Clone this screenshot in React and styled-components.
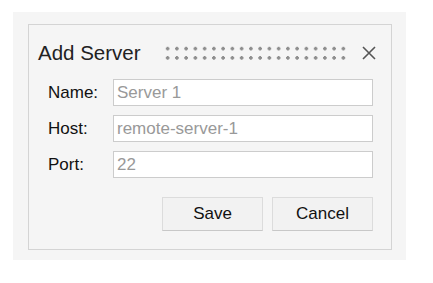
import React from "react";
import styled, { createGlobalStyle } from "styled-components";

const GlobalStyle = createGlobalStyle`
  body {
    margin: 0;
    background: #ffffff;
    font-family: "Liberation Sans", Arial, sans-serif;
  }
`;

const Backdrop = styled.div`
  margin: 12px 0 0 13px;
  width: 393px;
  height: 248px;
  box-sizing: border-box;
  padding: 12px 14px 10px 15px;
  background: #f5f5f5;
`;

const Dialog = styled.div`
  height: 100%;
  box-sizing: border-box;
  border: 1px solid #d4d4d4;
  padding: 13px 14px 0 9px;
  display: flex;
  flex-direction: column;
`;

const Header = styled.div`
  height: 30px;
  display: flex;
  align-items: center;
`;

const Title = styled.div`
  font-size: 20.5px;
  color: #222;
  white-space: nowrap;
`;

const Grip = styled.div`
  margin-left: 22px;
  width: 185px;
  height: 18.5px;
  background-image: radial-gradient(circle, #8e8e8e 1.5px, transparent 2px);
  background-size: 9.25px 9.25px;
`;

const Close = styled.button`
  margin-left: auto;
  width: 16px;
  height: 16px;
  padding: 0;
  border: none;
  background: none;
  display: flex;
  align-items: center;
  justify-content: center;
`;

const Form = styled.div`
  margin: 11px 4px 0 0;
  display: flex;
  flex-direction: column;
  gap: 9px;
`;

const Row = styled.label`
  display: grid;
  grid-template-columns: 65px 1fr;
  align-items: center;
  padding-left: 10px;
`;

const Label = styled.span`
  font-size: 17px;
  color: #111;
`;

const Input = styled.input`
  height: 27px;
  box-sizing: border-box;
  border: 1px solid #cccccc;
  background: #fff;
  padding: 0 3px;
  font-family: "Liberation Sans", Arial, sans-serif;
  font-size: 17px;
  color: #999;
  outline: none;
`;

const Actions = styled.div`
  margin: 19px 4px 0 0;
  display: flex;
  justify-content: flex-end;
  gap: 9px;
`;

const Button = styled.button`
  width: 101px;
  height: 34px;
  box-sizing: border-box;
  border: 1px solid #dcdcdc;
  border-bottom-color: #c8c8c8;
  background: #f2f2f2;
  font-family: "Liberation Sans", Arial, sans-serif;
  font-size: 17px;
  color: #111;
`;

const fields = [
  { label: "Name:", value: "Server 1" },
  { label: "Host:", value: "remote-server-1" },
  { label: "Port:", value: "22" },
];

export default function App() {
  return (
    <>
      <GlobalStyle />
      <Backdrop>
        <Dialog>
          <Header>
            <Title>Add Server</Title>
            <Grip />
            <Close aria-label="Close">
              <svg width="14" height="14" viewBox="0 0 14 14">
                <path d="M1 1L13 13M13 1L1 13" stroke="#555" strokeWidth="1.6" />
              </svg>
            </Close>
          </Header>
          <Form>
            {fields.map((f) => (
              <Row key={f.label}>
                <Label>{f.label}</Label>
                <Input defaultValue={f.value} />
              </Row>
            ))}
          </Form>
          <Actions>
            <Button>Save</Button>
            <Button>Cancel</Button>
          </Actions>
        </Dialog>
      </Backdrop>
    </>
  );
}
